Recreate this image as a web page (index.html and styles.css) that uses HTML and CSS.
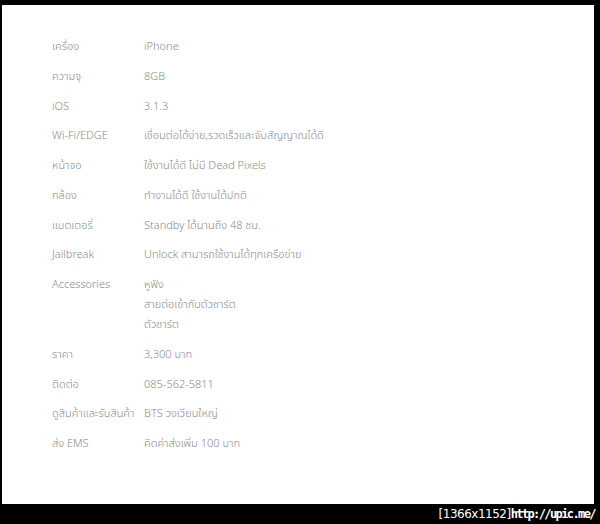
FILE: index.html
```html
<!DOCTYPE html>
<html lang="th">
<head>
    <meta charset="UTF-8">
    <title>iPhone 8GB</title>
    <link rel="stylesheet" href="styles.css">
</head>
<body>
    <div class="photo">
        <dl class="specs">
            <dt>เครื่อง</dt><dd>iPhone</dd>
            <dt>ความจุ</dt><dd>8GB</dd>
            <dt>iOS</dt><dd>3.1.3</dd>
            <dt>Wi-Fi/EDGE</dt><dd>เชื่อมต่อได้ง่าย,รวดเร็วและจับสัญญาณได้ดี</dd>
            <dt>หน้าจอ</dt><dd>ใช้งานได้ดี ไม่มี Dead Pixels</dd>
            <dt>กล้อง</dt><dd>ทำงานได้ดี ใช้งานได้ปกติ</dd>
            <dt>แบตเตอรี่</dt><dd>Standby ได้นานถึง 48 ชม.</dd>
            <dt>Jailbreak</dt><dd>Unlock สามารถใช้งานได้ทุกเครือข่าย</dd>
            <dt>Accessories</dt><dd>หูฟัง<br>สายต่อเข้ากับตัวชาร์ต<br>ตัวชาร์ต</dd>
            <dt>ราคา</dt><dd>3,300 บาท</dd>
            <dt>ติดต่อ</dt><dd>085-562-5811</dd>
            <dt>ดูสินค้าและรับสินค้า</dt><dd>BTS วงเวียนใหญ่</dd>
            <dt>ส่ง EMS</dt><dd>คิดค่าส่งเพิ่ม 100 บาท</dd>
        </dl>
    </div>
    <div class="stamp"><span class="size">[1366x1152]</span><span class="url">http://upic.me/</span></div>
</body>
</html>
```

FILE: styles.css
```css
body {
    margin: 0;
    background: #000;
    font-family: 'Noto Sans', 'Noto Sans Thai', 'DejaVu Sans', sans-serif;
}
.photo {
    background: #fff;
    height: 499px;
    margin: 5px 6px 0 2px;
    box-sizing: border-box;
    padding: 31px 0 0 50px;
}
.specs {
    display: grid;
    grid-template-columns: 92px 1fr;
    row-gap: 9.75px;
    margin: 0;
    font-size: 11px;
    font-weight: 300;
    line-height: 20px;
    color: #8a8a8a;
}
.specs dt, .specs dd {
    margin: 0;
    white-space: nowrap;
}
.stamp {
    height: 20px;
    line-height: 20px;
    text-align: right;
    padding-right: 5px;
    color: #fff;
    font-size: 12px;
}
.stamp .size {
    font-family: 'DejaVu Sans', sans-serif;
    letter-spacing: -0.5px;
}
.stamp .url {
    font-family: 'DejaVu Sans Mono', monospace;
    font-weight: bold;
    letter-spacing: -1.6px;
}
```
